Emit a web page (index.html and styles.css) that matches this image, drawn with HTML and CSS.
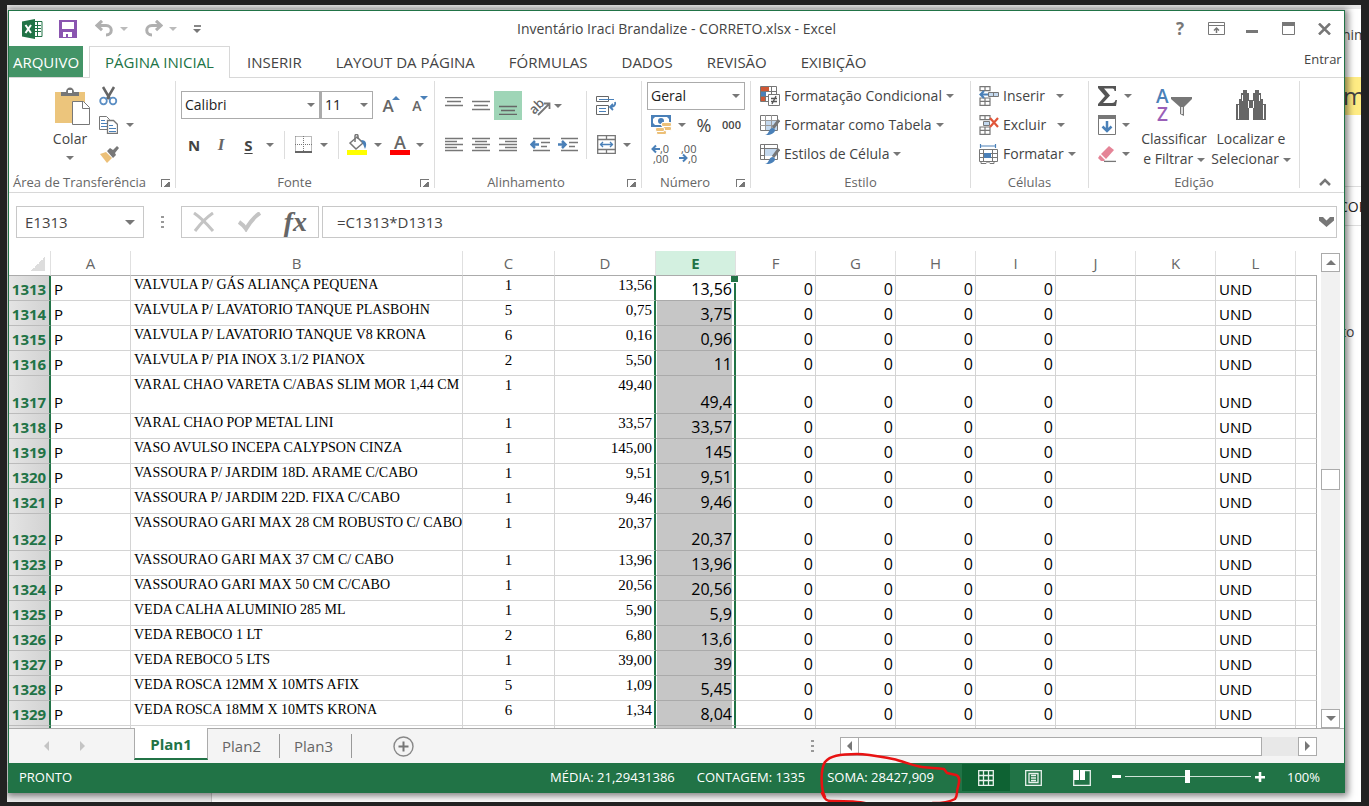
FILE: index.html
```html
<!DOCTYPE html>
<html lang="pt-BR">
<head>
<meta charset="utf-8">
<title>Inventário Iraci Brandalize - CORRETO.xlsx - Excel</title>
<link rel="stylesheet" href="styles.css">
</head>
<body>
<div class="page">
  <div class="behind" aria-hidden="true">
    <span class="peek peek-top">nim</span>
    <span class="peek peek-mark">m</span>
    <span class="peek peek-row">COPI</span>
    <span class="peek peek-low">to</span>
    <span class="behind-footer"></span>
  </div>

  <main class="window">
    <header class="titlebar">
      <div class="quick">
        <svg class="logo" width="21" height="20" viewBox="0 0 21 20"><path fill="#fff" stroke="#217346" d="M11 2.500h9v15h-9z"/><path stroke="#217346" d="M12 6.500h7M12 9.500h7M12 12.500h7M15.500 3v14"/><path fill="#217346" d="M0 2.500 13 0v20L0 17.500z"/><path stroke="#fff" stroke-width="2" d="m3.500 6 5.500 8M9 6l-5.500 8"/></svg>
        <button class="q save" aria-label="Salvar"><svg width="18" height="18" viewBox="0 0 18 18"><path fill="#8a55b0" d="M0 0h18v18H0z"/><path fill="#fff" d="M3 2h12v7H3zM4 12h9v5H9v-3H7v3H4z"/></svg></button>
        <button class="q undo" aria-label="Desfazer"><svg width="19" height="17" viewBox="0 0 19 17"><path fill="none" stroke="#b0b0b0" stroke-width="3" d="M3 5.500h8c7 0 7 9.500 0 9.500"/><path fill="none" stroke="#b0b0b0" stroke-width="3" d="m7 .8-5 4.700 5 4.700"/></svg><i class="caret pale"></i></button>
        <button class="q redo" aria-label="Refazer"><svg width="19" height="17" viewBox="0 0 19 17"><path fill="none" stroke="#b0b0b0" stroke-width="3" d="M16 5.500H8c-7 0-7 9.500 0 9.500"/><path fill="none" stroke="#b0b0b0" stroke-width="3" d="m12 .8 5 4.700-5 4.700"/></svg><i class="caret pale"></i></button>
        <button class="q more" aria-label="Personalizar"><i class="dash"></i><i class="caret"></i></button>
      </div>
      <h1>Inventário Iraci Brandalize - CORRETO.xlsx - Excel</h1>
      <div class="controls">
        <button class="help" aria-label="Ajuda">?</button>
        <button aria-label="Opções da faixa"><svg width="17" height="13" viewBox="0 0 17 13"><path fill="none" stroke="#777" d="M.5.500h16v12H.5zM1 3.500h15"/><path fill="none" stroke="#777" stroke-width="1.500" d="M8.500 11V6M6 8.500l2.500-2.500 2.500 2.500"/></svg></button>
        <button aria-label="Minimizar"><svg width="12" height="13" viewBox="0 0 12 13"><path fill="#777" d="M0 8h12v3H0z"/></svg></button>
        <button aria-label="Maximizar"><svg width="13" height="13" viewBox="0 0 13 13"><path fill="none" stroke="#777" d="M.5.500h12v12H.5z"/><path fill="#777" d="M0 0h13v4H0z"/></svg></button>
        <button aria-label="Fechar"><svg width="13" height="12" viewBox="0 0 13 12"><path stroke="#777" stroke-width="2.500" d="m1 .5 11 11M12 .5l-11 11"/></svg></button>
      </div>
    </header>

    <nav class="tabs">
      <button class="file">ARQUIVO</button>
      <button class="tab on">PÁGINA INICIAL</button>
      <button class="tab">INSERIR</button>
      <button class="tab">LAYOUT DA PÁGINA</button>
      <button class="tab">FÓRMULAS</button>
      <button class="tab">DADOS</button>
      <button class="tab">REVISÃO</button>
      <button class="tab">EXIBIÇÃO</button>
      <a class="signin" href="#entrar">Entrar</a>
    </nav>

    <section class="ribbon">
      <div class="group g-clip">
        <div class="body">
          <button class="big paste"><svg width="36" height="40" viewBox="0 0 36 40"><path fill="#ecc57c" d="M1 5h30v31H1z"/><path fill="#777" d="M7 9V5h5c0-6 8-6 8 0h5v4z"/><path fill="#fff" d="M14 3h4v3h-4z"/><path fill="#fff" stroke="#777" d="M18.500 14.500h11l6 6v17h-17z"/><path fill="none" stroke="#777" d="M28.500 15v6.500H35"/></svg><span>Colar</span><i class="caret"></i></button>
          <div class="stack">
            <button aria-label="Recortar"><svg width="19" height="20" viewBox="0 0 19 20"><path stroke="#666" stroke-width="2.500" d="M4 1l7 12M15 1 8 13"/><g fill="none" stroke="#5b8ec4" stroke-width="1.800"><circle cx="4.500" cy="15" r="3.300"/><circle cx="14" cy="15" r="3.300"/></g></svg></button>
            <button aria-label="Copiar"><svg width="19" height="18" viewBox="0 0 19 18"><path fill="#fff" stroke="#777" d="M.5.500h7l3 3v10H.5z"/><path stroke="#4a80b8" d="M2 4.500h4M2 7.500h6M2 10.500h6"/><path fill="#fff" stroke="#777" stroke-width="1.300" d="M8.500 4.500h6l4 4v9h-10z"/><path stroke="#4a80b8" d="M10 9.500h4M10 12.500h7M10 15.500h7"/></svg><i class="caret"></i></button>
            <button aria-label="Pincel de formatação"><svg width="20" height="18" viewBox="0 0 20 18"><path fill="#777" d="m8 6 3-3 3 2 4-4 2 2-4 5 1 2-3 3z"/><path fill="#ecc078" d="m1 9 6-2 6 6-5 5z"/></svg></button>
          </div>
        </div>
        <footer>Área de Transferência<i class="launch"></i></footer>
      </div>

      <div class="group g-font">
        <div class="body rows2">
          <div class="fontline">
            <label class="combo name"><select aria-label="Fonte"><option>Calibri</option></select><i class="caret"></i></label>
            <label class="combo size"><select aria-label="Tamanho"><option>11</option></select><i class="caret"></i></label>
            <button class="glyph grow" aria-label="Aumentar fonte">A<i class="up"></i></button>
            <button class="glyph shrink" aria-label="Diminuir fonte">A<i class="down"></i></button>
          </div>
          <div class="styleline">
            <button class="glyph b">N</button><button class="glyph i">I</button><button class="glyph u">S</button><i class="caret"></i><i class="sep"></i>
            <button aria-label="Bordas"><svg width="17" height="17" viewBox="0 0 17 17"><path fill="none" stroke="#777" stroke-dasharray="1 1" d="M.5.500h16v15M.5.500v15M8.500 0v15M0 8.500h17"/><path fill="#666" d="M0 15h17v2H0z"/></svg></button><i class="caret"></i><i class="sep"></i>
            <button aria-label="Cor de preenchimento"><svg width="21" height="21" viewBox="0 0 21 21"><path fill="#fff" stroke="#777" stroke-width="1.500" d="M3 9l7-6 6 6-7 6z"/><path fill="none" stroke="#777" stroke-width="1.500" d="M8 8V2c0-2 3-2 3 0v3"/><path fill="#4a80b8" d="M14 6c6 0 6 5 4 9l-2-5z"/><path fill="#ff0" d="M0 16h20v5H0z"/></svg></button><i class="caret"></i>
            <button class="glyph color" aria-label="Cor da fonte">A</button><i class="caret"></i>
          </div>
        </div>
        <footer>Fonte<i class="launch"></i></footer>
      </div>

      <div class="group g-align">
        <div class="body rows2 cols">
          <div class="aligns">
            <button aria-label="Alinhar em cima"><svg width="18" height="18" viewBox="0 0 18 18"><path stroke="#777" stroke-width="1.300" d="M0 .5h18M2 4.500h14M0 8.500h18"/></svg></button>
            <button aria-label="Alinhar no meio"><svg width="18" height="18" viewBox="0 0 18 18"><path stroke="#777" stroke-width="1.300" d="M0 4.500h18M2 8.500h14M0 12.500h18"/></svg></button>
            <button class="on" aria-label="Alinhar embaixo"><svg width="18" height="18" viewBox="0 0 18 18"><path stroke="#666" stroke-width="1.300" d="M0 9.500h18M2 13.500h14M0 17.500h18"/></svg></button>
            <button class="orient" aria-label="Orientação"><svg width="21" height="20" viewBox="0 0 21 20"><path fill="none" stroke="#777" stroke-width="1.800" d="M8 19 19 8M14 7.500h5.500V13"/><text class="ab" x="-2" y="14" transform="rotate(-45 7 9)">ab</text></svg><i class="caret"></i></button>
            <span></span>
            <button aria-label="Esquerda"><svg width="18" height="15" viewBox="0 0 18 15"><path stroke="#777" stroke-width="1.300" d="M0 1.500h18M0 4.500h12M0 7.500h18M0 10.500h12M0 13.500h18"/></svg></button>
            <button aria-label="Centro"><svg width="18" height="15" viewBox="0 0 18 15"><path stroke="#777" stroke-width="1.300" d="M0 1.500h18M3 4.500h12M0 7.500h18M3 10.500h12M0 13.500h18"/></svg></button>
            <button aria-label="Direita"><svg width="18" height="15" viewBox="0 0 18 15"><path stroke="#777" stroke-width="1.300" d="M0 1.500h18M6 4.500h12M0 7.500h18M6 10.500h12M0 13.500h18"/></svg></button>
            <button class="indent" aria-label="Diminuir recuo"><svg width="20" height="15" viewBox="0 0 20 15"><path stroke="#777" stroke-width="1.300" d="M3 1.500h17M11 5.500h9M11 9.500h6M3 13.500h17"/><path fill="none" stroke="#4a80b8" stroke-width="2.500" d="M9 7.500H2M5 4 1.500 7.500 5 11"/></svg></button>
            <button aria-label="Aumentar recuo"><svg width="20" height="15" viewBox="0 0 20 15"><path stroke="#777" stroke-width="1.300" d="M3 1.500h17M11 5.500h9M11 9.500h6M3 13.500h17"/><path fill="none" stroke="#4a80b8" stroke-width="2.500" d="M0 7.500h7M4 4l3.500 3.500L4 11"/></svg></button>
          </div>
          <i class="sep tall"></i>
          <div class="wraps">
            <button aria-label="Quebrar texto"><svg width="21" height="19" viewBox="0 0 21 19"><path fill="none" stroke="#666" d="M.5.500h12v5H.5zM.5 9.500h12v9H.5z"/><path fill="none" stroke="#4a80b8" d="M3 3.500h15M3 12.500h7M3 15.500h7"/><path fill="none" stroke="#4a80b8" stroke-width="1.800" d="M19 6c1 3-1 5-5 5M17 8l-3 3 3 3"/></svg></button><span></span>
            <button aria-label="Mesclar"><svg width="19" height="19" viewBox="0 0 19 19"><path fill="none" stroke="#777" stroke-width="1.300" d="M.7.700h17.600v17.600H.7zM0 4.500h19M0 14.500h19M9.500 0v4.500M9.500 14.500V19"/><path fill="none" stroke="#4a80b8" stroke-width="1.300" d="M3 9.500h13M6 7 3.500 9.500 6 12M13 7l2.500 2.500L13 12"/></svg></button><i class="caret"></i>
          </div>
        </div>
        <footer>Alinhamento<i class="launch"></i></footer>
      </div>

      <div class="group g-num">
        <div class="body stackbody">
          <label class="combo fmt"><select aria-label="Formato de número"><option>Geral</option></select><i class="caret"></i></label>
          <div class="numline">
            <button aria-label="Moeda"><svg width="21" height="20" viewBox="0 0 21 20"><path fill="#fff" stroke="#4a80b8" stroke-width="2" d="M1 1h18v10H1z"/><path fill="#4a80b8" d="M1 1h4L1 5zM19 1h-4l4 4zM1 11V7l4 4z"/><circle cx="10" cy="6" r="3" fill="#4a80b8"/><g fill="#ecc078" stroke="#fff"><rect x="10.500" y="7.500" width="10" height="4" rx="1.500"/><rect x="10.500" y="11.500" width="10" height="4" rx="1.500"/><rect x="5.500" y="15.500" width="10" height="4" rx="1.500"/><rect x="4.500" y="12.500" width="9" height="4" rx="1.500"/></g></svg></button><i class="caret"></i>
            <button class="pct">%</button><button class="zeros">000</button>
          </div>
          <div class="numline">
            <button class="dec" aria-label="Aumentar casas"><svg width="20" height="20" viewBox="0 0 20 20"><path fill="none" stroke="#4a80b8" stroke-width="2" d="M9 5H2M5 1.500 1.500 5 5 8.500"/><text x="9" y="9">,0</text><text x="2" y="19">,00</text></svg></button>
            <button class="dec wide" aria-label="Diminuir casas"><svg width="20" height="20" viewBox="0 0 20 20"><path fill="none" stroke="#4a80b8" stroke-width="2" d="M0 14h7M4 10.500 7.500 14 4 17.500"/><text x="2" y="9">,00</text><text x="9" y="19">,0</text></svg></button>
          </div>
        </div>
        <footer>Número<i class="launch"></i></footer>
      </div>

      <div class="group g-style">
        <div class="body stackbody">
          <button class="cmd"><svg width="20" height="20" viewBox="0 0 20 20"><path fill="#fff" stroke="#777" d="M.5.500h16v15H.5zM0 5.500h17M0 10.500h17M5.500 0v15M11.500 0v15"/><path fill="#cf5734" d="M1 1h8v4H1zM1 11h4v4H1z"/><path fill="#4a80b8" d="M1 6h5v4H1z"/><path fill="#fff" stroke="#777" d="M8.500 8.500h11v11h-11z"/><path stroke="#555" stroke-width="1.300" d="M11 12.500h6M11 15.500h6M16 10l-4 8"/></svg>Formatação Condicional<i class="caret"></i></button>
          <button class="cmd"><svg width="20" height="20" viewBox="0 0 20 20"><path fill="#fff" stroke="#777" d="M.5.500h17v15H.5z"/><path fill="#c3d8ee" d="M5 5h12v10H5z"/><path stroke="#999" d="M0 5.500h17M0 10.500h17M5.500 0v15M11.500 0v15"/><path stroke="#777" stroke-width="3" d="m19 5-6 8"/><path fill="#4a80b8" d="M5 20c5-1 3-7 8-7 5 2 0 8-8 7z"/></svg>Formatar como Tabela<i class="caret"></i></button>
          <button class="cmd"><svg width="20" height="20" viewBox="0 0 20 20"><path fill="#fff" stroke="#777" d="M.5.500h17v15H.5zM0 4.500h17M4.500 0v15M0 11.500h17"/><path fill="#c3d8ee" d="M5 5h12v7H5z"/><path stroke="#777" stroke-width="3" d="m19 5-6 8"/><path fill="#4a80b8" d="M5 20c5-1 3-7 8-7 5 2 0 8-8 7z"/></svg>Estilos de Célula<i class="caret"></i></button>
        </div>
        <footer>Estilo</footer>
      </div>

      <div class="group g-cells">
        <div class="body stackbody">
          <button class="cmd spaced"><svg width="20" height="20" viewBox="0 0 20 20"><path fill="#fff" stroke="#777" stroke-width="1.200" d="M1 .6h10v4H1zM6 0v4M1 15.400h10v4H1zM6 12v7.500M1 12h10v3.500H1z"/><path fill="#c3d8ee" stroke="#777" d="M9.500 6.500h10v4h-10z"/><path stroke="#777" d="M14.500 6v5"/><path fill="none" stroke="#4a80b8" stroke-width="2.200" d="M9 8.500H2M5 5 1.500 8.500 5 12"/></svg>Inserir<i class="caret"></i></button>
          <button class="cmd spaced"><svg width="20" height="20" viewBox="0 0 20 20"><path fill="#fff" stroke="#777" stroke-width="1.200" d="M1 .6h10v4H1zM6 0v4M1 15.400h10v4H1zM6 12v7.500M1 12h10v3.500H1z"/><path fill="#c3d8ee" stroke="#777" d="M4.500 6.500h6v4h-6z"/><path stroke="#e0563a" stroke-width="2.200" d="m11 3 8 9M19 3l-8 9"/></svg>Excluir<i class="caret"></i></button>
          <button class="cmd"><svg width="20" height="20" viewBox="0 0 20 20"><path fill="none" stroke="#4a80b8" stroke-width="1.200" d="M1.500 0v4M16.500 0v4M2 2h14"/><path fill="#fff" stroke="#777" d="M.5 5.500h18v12H.5zM0 9.500h19M0 13.500h19M4.500 5v12M13.500 5v12"/><path fill="#4a80b8" d="M5 9h7v5H5z"/><path fill="none" stroke="#777" d="M2 17v2.500h5l2-2 2 2h4V17"/></svg>Formatar<i class="caret"></i></button>
        </div>
        <footer>Células</footer>
      </div>

      <div class="group g-edit">
        <div class="body">
          <div class="stack">
            <button aria-label="Soma"><svg width="20" height="20" viewBox="0 0 20 20"><path fill="#555" d="M0 0h18v5h-1.500c0-2-1-2.500-3-2.500H6l6 7-7 7.500h9c2 0 3-1 3.500-3H19l-1 6H0v-2l7-8L0 2z"/></svg><i class="caret"></i></button>
            <button aria-label="Preencher"><svg width="18" height="20" viewBox="0 0 18 20"><path fill="#fff" stroke="#777" d="M.5.500h17v19H.5z"/><path fill="#777" d="M0 0h18v4H0z"/><path fill="none" stroke="#4a80b8" stroke-width="2.500" d="M9 6v10M4.500 11.500 9 16l4.500-4.500"/></svg><i class="caret"></i></button>
            <button aria-label="Limpar"><svg width="18" height="18" viewBox="0 0 18 18"><path fill="#e58497" d="m3 9 8-8 5 4-8 9z"/><path fill="#e58497" d="m2 10 5 5-1 1H3l-3-3z"/><path stroke="#777" stroke-width="1.300" d="M6 16.400h12"/></svg><i class="caret"></i></button>
          </div>
          <button class="big sort"><svg width="38" height="36" viewBox="0 0 38 36"><text class="az a" x="1" y="16">A</text><text class="az z" x="2" y="34">Z</text><path fill="#777" d="M16 10h21v2l-8 8v9l-4-2v-7l-9-8z"/><path stroke="#fff" stroke-width="1.500" d="M27 20v7"/></svg><span>Classificar<br>e Filtrar <i class="caret"></i></span></button>
          <button class="big find"><svg width="34" height="30" viewBox="0 0 34 30"><path fill="#666" d="M9 0h4v3h2v7h4V3h2V0h4v3h2v6h2v5h3v16H19V18h-4v12H2V14h3V9h2V3h2z"/><path fill="none" stroke="#fff" d="M4.500 15v14M29.500 15v14M8.500 5v6M25.500 5v6M14.500 11v7M19.500 11v7"/></svg><span>Localizar e<br>Selecionar <i class="caret"></i></span></button>
        </div>
        <footer>Edição</footer>
      </div>
      <button class="collapse" aria-label="Recolher a faixa"><svg width="12" height="8" viewBox="0 0 12 8"><path fill="none" stroke="#777" stroke-width="2.500" d="m1 7 5-5 5 5"/></svg></button>
    </section>

    <section class="formulabar">
      <div class="namebox"><input aria-label="Caixa de nome" value="E1313"><i class="caret large"></i></div>
      <i class="dots"></i>
      <div class="fx">
        <button aria-label="Cancelar"><svg width="22" height="20" viewBox="0 0 22 20"><path fill="none" stroke="#c4c4c4" stroke-width="3" d="M1 1c6 4 13 11 19 18M20 1C14 5 8 11 2 19"/></svg></button>
        <button aria-label="Inserir"><svg width="24" height="20" viewBox="0 0 24 20"><path fill="none" stroke="#c4c4c4" stroke-width="4" d="M2 10c3 2 5 4 7 7C13 10 17 5 23 1"/></svg></button>
        <button class="fxmark">fx</button>
      </div>
      <div class="formula"><input aria-label="Fórmula" value="=C1313*D1313"><svg width="15" height="10" viewBox="0 0 15 10"><path fill="#777" d="M0 0h4l3.500 3.500L11 0h4v3.500L7.500 10 0 3.500z"/></svg></div>
    </section>

    <section class="sheetarea">
      <div class="grid">
        <table>
          <colgroup><col class="c-h"><col class="c-n"><col class="c-b"><col class="c-c"><col class="c-d"><col class="c-e"><col class="c-n" span="7"><col></colgroup>
          <thead><tr><th class="corner"></th><th>A</th><th>B</th><th>C</th><th>D</th><th class="sel">E</th><th>F</th><th>G</th><th>H</th><th>I</th><th>J</th><th>K</th><th>L</th><th></th></tr></thead>
          <tbody id="rows"></tbody>
        </table>
      </div>
      <div class="vscroll">
        <button aria-label="Rolar para cima"><i class="tri n"></i></button>
        <div class="track"><div class="thumb"></div></div>
        <button aria-label="Rolar para baixo"><i class="tri s"></i></button>
      </div>
    </section>

    <section class="sheetbar">
      <button class="nav" aria-label="Anterior"><i class="tri w pale"></i></button>
      <button class="nav" aria-label="Próxima"><i class="tri e pale"></i></button>
      <button class="sheet on">Plan1</button>
      <button class="sheet">Plan2</button>
      <button class="sheet">Plan3</button>
      <button class="add" aria-label="Nova planilha"><svg width="21" height="21" viewBox="0 0 21 21"><circle cx="10.500" cy="10.500" r="9.500" fill="none" stroke="#888" stroke-width="1.400"/><path stroke="#777" stroke-width="2" d="M5.500 10.500h10M10.500 5.500v10"/></svg></button>
      <i class="dots"></i>
      <div class="hscroll">
        <button aria-label="Rolar à esquerda"><i class="tri w"></i></button>
        <div class="track"><div class="thumb"></div></div>
        <button aria-label="Rolar à direita"><i class="tri e"></i></button>
      </div>
    </section>

    <footer class="status">
      <span class="ready">PRONTO</span>
      <span>MÉDIA: 21,29431386</span>
      <span>CONTAGEM: 1335</span>
      <span class="sum">SOMA: 28427,909<svg class="ring" width="144" height="54" viewBox="0 0 144 54"><path fill="none" stroke="#e81212" stroke-width="2.500" stroke-linecap="round" stroke-linejoin="round" d="M6 45C2 38 1 18 6 10 11 4 20 2 38 2c12 0 25 3 36 5 10 2 20 7 29 8 8 1 14 1 22 2l3 4 9 2c5 2 3 8 2 12-2 5 0 9-3 12-6 3-15 4-22 4-9 2-17 3-33 3-16 0-25 0-32-2-6-3-28-3-37-3-4 0-6-1-9-8"/></svg></span>
      <div class="views">
        <button class="on" aria-label="Normal"><svg width="16" height="16" viewBox="0 0 16 16"><path fill="none" stroke="#e8f1ec" stroke-width="1.300" d="M.7.700h14.600v14.600H.7zM.7 5.500h14.600M.7 10.500h14.600M5.500.7v14.600M10.500.7v14.600"/></svg></button>
        <button aria-label="Layout da página"><svg width="17" height="16" viewBox="0 0 17 16"><path fill="none" stroke="#e8f1ec" stroke-width="1.300" d="M.7.700h15.600v14.600H.7zM4 3.500h9v9H4zM6 5.500h5M6 8h5M6 10.500h5"/></svg></button>
        <button aria-label="Quebra de página"><svg width="18" height="16" viewBox="0 0 18 16"><path fill="none" stroke="#e8f1ec" stroke-width="1.300" d="M.7.700h16.600v14.600H.7z"/><path fill="#fff" d="M1 0h11v10H7V7H6v3H1z"/><path stroke="#217346" d="M6.500 0v8"/></svg></button>
      </div>
      <div class="zoom">
        <button aria-label="Reduzir"><svg width="9" height="9" viewBox="0 0 9 9"><path fill="#fff" d="M0 3h9v3H0z"/></svg></button>
        <input type="range" aria-label="Zoom" min="0" max="100" value="50">
        <button aria-label="Ampliar"><svg width="10" height="10" viewBox="0 0 10 10"><path fill="#fff" d="M0 4h10v2.500H0zM3.700 0h2.600v10H3.700z"/></svg></button>
      </div>
      <button class="percent">100%</button>
    </footer>
  </main>
</div>
<script src="rows.js"></script>
</body>
</html>
```

FILE: styles.css
```css
* { box-sizing: border-box; }
html, body { height: 100%; }
body { margin: 0; padding: 5px 8px 4px 7px; background: #222; color: #444; font: 14px/20px "Open Sans", "Noto Sans", sans-serif; overflow: hidden; }
button, input, select { font: inherit; color: inherit; margin: 0; padding: 0; border: 0; background: none; border-radius: 0; outline: 0; }
button { display: flex; align-items: center; justify-content: center; white-space: nowrap; }
svg { display: block; flex: none; }
i { font-style: normal; }

.page { position: relative; height: 100%; background: #fff; display: flex; overflow: hidden; }
.behind { position: absolute; inset: 0; border-top: 4px solid #e8e8e8; }
.peek { position: absolute; right: 0; width: 24px; overflow: hidden; text-align: left; }
.peek-top { top: 16px; height: 22px; padding-left: 5px; }
.peek-mark { top: 68px; height: 38px; padding-left: 6px; background: #ffec84; font-size: 24px; line-height: 38px; }
.peek-row { top: 177px; height: 40px; padding-left: 2px; line-height: 40px; border: 1px solid #ddd; border-width: 1px 0; color: #222; }
.peek-low { top: 313px; padding-left: 4px; }
.behind-footer { position: absolute; left: 0; bottom: 0; width: 205px; height: 20px; background: #eee; border-right: 1px solid #ccc; }

.window { position: relative; flex: 1; min-width: 0; margin: 5px 16px 9px 1px; display: flex; flex-direction: column; background: #fff; border: 1px solid #217346; box-shadow: 1px 1px 7px 2px rgba(0, 0, 0, .5); }

.caret { display: inline-block; flex: none; width: 0; height: 0; border: solid transparent; border-width: 4px 4px 0; border-top-color: #777; place-self: center; }
.caret.pale { border-top-color: #bbb; }
.caret.large { border-width: 5px 5px 0; }
.sep { width: 1px; height: 28px; background: #ddd; place-self: center; }
.dots { width: 3px; height: 13px; background: repeating-linear-gradient(#999 0 2px, transparent 2px 5px); }
.tri { width: 0; height: 0; border: 5px solid transparent; }
.tri.n { border-top: 0; border-bottom-color: #777; }
.tri.s { border-bottom: 0; border-top-color: #777; }
.tri.w { border-left: 0; border-right-color: #777; }
.tri.e { border-right: 0; border-left-color: #777; }
.tri.w.pale { border-right-color: #c4c4c4; }
.tri.e.pale { border-left-color: #c4c4c4; }

.titlebar { flex: none; height: 35px; display: grid; grid-template-columns: 1fr auto 1fr; align-items: center; }
.titlebar h1 { margin: 0; font-size: 14px; font-weight: 400; }
.quick { display: flex; align-items: center; padding-left: 13px; }
.logo { margin-right: 16px; }
.save { margin-right: 18px; }
.undo, .redo { gap: 6px; margin-right: 16px; }
.more { flex-direction: column; gap: 2px; }
.dash { width: 7px; height: 2px; background: #888; }
.controls { display: flex; justify-content: flex-end; padding-right: 2px; }
.controls button { width: 36px; height: 30px; }
.controls .help { font-size: 17px; font-weight: 700; color: #777; }

.tabs { flex: none; height: 32px; display: flex; border-bottom: 1px solid #d8d8d8; font-size: 15px; }
.file { width: 74px; margin-right: 6px; background: #439467; color: #fff; height: 31px; }
.tab { height: 32px; padding: 0 17px; }
.tab.on { width: 141px; padding: 0 0 1px; color: #217346; background: #fff; border: 1px solid #d8d8d8; border-bottom: 0; }
.signin { margin-left: auto; width: 40px; height: 26px; line-height: 26px; overflow: hidden; color: #444; text-decoration: none; font-size: 13px; }

.ribbon { flex: none; display: flex; padding: 3px 0 4px; border-bottom: 1px solid #d8d8d8; }
.group { flex: none; height: 107px; display: flex; flex-direction: column; border-right: 1px solid #ddd; }
.group .body { height: 87px; flex: none; display: flex; }
.group footer { height: 20px; display: flex; align-items: flex-end; justify-content: center; line-height: 12px; font-size: 13px; color: #666; position: relative; }
.launch { position: absolute; right: 5px; bottom: 1px; width: 9px; height: 8px; border: solid #777; border-width: 1px 0 0 1px; background: linear-gradient(135deg, transparent 45%, #777 45%) right bottom / 6px 5px no-repeat; }
.group .stackbody { flex-direction: column; }
.stack { display: grid; grid-template-rows: repeat(3, 29px); }
.stack button { gap: 8px; justify-content: flex-start; }
.big { flex-direction: column; justify-content: flex-start; padding-top: 6px; text-align: center; }
.big span { line-height: 20px; }

.g-clip { width: 167px; }
.g-clip .body { padding-left: 41px; gap: 9px; }
.g-clip footer { justify-content: flex-start; padding-left: 4px; }
.paste { width: 40px; }
.paste span { margin-top: 2px; }
.paste svg { margin-left: 4px; }
.paste .caret { margin-top: 7px; }

.g-font { width: 259px; }
.g-font .body { padding-left: 5px; flex-direction: column; }
.g-font footer { padding-right: 21px; }
.rows2 { padding-top: 10px; gap: 10px; }
.fontline { display: grid; grid-template-columns: 139px 53px 30px 28px; height: 29px; }
.styleline { display: grid; grid-template-columns: 26px 28px 27px 16px 12px 26px 16px 12px 26px 16px 28px 12px; height: 29px; align-items: center; }
.combo { display: grid; grid-template-columns: 1fr 17px; border: 1px solid #ababab; height: 28px; background: #fff; color: #222; }
.combo.size { border-left-width: 2px; }
.combo select { appearance: none; width: 100%; height: 26px; padding-left: 3px; }
.glyph { position: relative; font-weight: 600; color: #666; font-size: 15px; }
.glyph.b { font-weight: 700; color: #444; }
.glyph.i { font-style: italic; font-family: "Liberation Serif", serif; font-size: 17px; font-weight: 700; }
.glyph.u { text-decoration: underline; text-underline-offset: 2px; font-weight: 700; color: #444; }
.glyph.grow { font-size: 17px; }
.glyph.shrink { font-size: 14px; }
.up, .down { position: absolute; right: 3px; top: 5px; border: 4px solid transparent; }
.up { border-top: 0; border-bottom-color: #4a80b8; }
.down { border-bottom: 0; border-top-color: #4a80b8; }
.glyph.color { place-self: center; width: 20px; height: 21px; border-bottom: 5px solid #f00; font-size: 18px; line-height: 16px; }

.g-align { width: 207px; }
.g-align .body { padding-left: 5px; gap: 0; }
.aligns { display: grid; grid-template-columns: 27px 27px 32px 28px 28px; grid-template-rows: 29px 29px; row-gap: 10px; }
.aligns .on { background: #9fd5b7; }
.aligns button:nth-child(5n + 3) { width: 28px; }
.aligns .orient { gap: 3px; justify-content: flex-start; margin-left: 4px; }
.ab { font-size: 13px; font-weight: 600; fill: #666; }
.sep.tall { height: 68px; margin: 0 4px; align-self: flex-start; }
.wraps { display: grid; grid-template-columns: 30px 12px; grid-template-rows: 29px 29px; row-gap: 10px; }
.g-align footer { padding-right: 24px; }

.g-num { width: 109px; }
.g-num .body { padding: 1px 5px 0; }
.numline { display: grid; grid-template-columns: 28px 14px 30px 25px; height: 29px; }
.pct { font-size: 18px; }
.zeros { font-size: 11px; font-weight: 600; }
.dec text { font-size: 11px; fill: #555; }
.dec.wide { width: 28px; }
.g-num footer { padding-right: 22px; }

.cmd { height: 29px; justify-content: flex-start; gap: 4px; }
.g-style { width: 220px; }
.g-style .body { padding-left: 9px; }
.g-cells { width: 118px; }
.g-cells .body { padding-left: 8px; }
.spaced .caret { margin-left: 7px; }

.g-edit { width: 211px; }
.g-edit .body { padding-left: 9px; }
.g-edit .stack { width: 40px; }
.g-edit .stack button { gap: 6px; }
.sort { width: 72px; }
.find { width: 82px; }
.sort span { margin-top: 6px; }
.find svg { margin-top: 3px; }
.find span { margin-top: 9px; }
.big span .caret { vertical-align: middle; }
.az { font-size: 19px; font-weight: 600; }
.az.a { fill: #4a80b8; }
.az.z { fill: #9a5fb8; }
.collapse { flex: 1; align-self: flex-end; height: 12px; padding-left: 6px; }

.formulabar { flex: none; height: 58px; padding: 13px 7px 13px; display: flex; align-items: center; font-size: 15px; }
.namebox, .fx, .formula { height: 32px; border: 1px solid #c8c8c8; display: flex; align-items: center; }
.namebox { width: 128px; padding-right: 8px; }
.namebox input { flex: 1; min-width: 0; padding-left: 8px; }
.formulabar .dots { margin: 0 17px; }
.fx { width: 138px; justify-content: space-between; padding: 0 11px; margin-right: 3px; }
.fxmark { font: italic 700 28px/28px "Liberation Serif", serif; color: #666; }
.formula { flex: 1; padding: 0 2px 0 14px; }
.formula input { flex: 1; min-width: 0; }

.sheetarea { flex: 1; min-height: 0; display: flex; background: #fff; }
.grid { flex: 1; min-width: 0; overflow: hidden; }
table { table-layout: fixed; width: 100%; border-collapse: separate; border-spacing: 0; }
.c-h { width: 42px; }
.c-n { width: 80px; }
.c-b { width: 332px; }
.c-c { width: 92px; }
.c-d { width: 101px; }
.c-e { width: 80px; }
thead th { height: 25px; padding: 0; font-size: 15px; line-height: 22px; font-weight: 400; color: #666; border-right: 1px solid #e0e0e0; border-bottom: 1px solid #ababab; }
thead th:last-child { border-right: 0; }
thead .sel { background: #d3f0e0; color: #217346; font-weight: 700; }
.corner { background: linear-gradient(135deg, transparent 50%, #ddd 50%) 22px 6px / 14px 14px no-repeat; }
tbody tr { height: 25px; }
tbody tr.high { height: 38px; }
tbody tr.high2 { height: 37px; }
tbody td, tbody th { padding: 0; border-right: 1px solid #d4d4d4; border-bottom: 1px solid #d4d4d4; white-space: nowrap; vertical-align: bottom; font-size: 16px; line-height: 22px; color: #000; overflow: hidden; }
tbody th { background: linear-gradient(90deg, #e4e4e4, #d2d2d2); border-right: 2px solid #217346; border-bottom-color: #bbb; color: #217346; font-size: 15px; font-weight: 700; text-align: center; }
tbody td:last-child { border-right: 1px solid #ababab; }
tbody .txt { padding-left: 3px; font-size: 15px; }
tbody .old { vertical-align: top; font: 15px/18px "Liberation Serif", serif; }
tbody .desc { font-size: 14px; padding-left: 3px; }
tbody .mid { text-align: center; }
tbody .num { text-align: right; padding-right: 2px; }
tbody .num.old { border-right: 2px solid #217346; }
tbody .sel { background: #c6c6c6; border-right: 2px solid #217346; border-bottom-color: #aaa; box-shadow: inset 1px 0 #fff, inset -2px 0 #fff; }
tbody tr:first-child .sel { background: #fff; position: relative; overflow: visible; }
tbody tr:first-child .sel::after { content: ""; position: absolute; right: -4px; top: 0; width: 7px; height: 6px; background: #217346; border-bottom: 1px solid #fff; border-left: 1px solid #fff; }

.vscroll { flex: none; width: 19px; margin: 2px 4px 0; display: flex; flex-direction: column; }
.vscroll button, .hscroll button { flex: none; width: 19px; height: 19px; background: #fff; border: 1px solid #ababab; }
.vscroll .track { flex: 1; background: #f1f1f1; display: flex; flex-direction: column; }
.vscroll .thumb { margin-top: 197px; height: 21px; background: #fff; border: 1px solid #ababab; }

.sheetbar { flex: none; height: 35px; display: flex; align-items: center; background: #f4f4f4; border-top: 1px solid #ababab; padding: 0 27px 0 19px; font-size: 15px; }
.nav { width: 36px; height: 30px; }
.nav:nth-child(2) { margin-right: 34px; }
.sheet { align-self: flex-start; width: 72px; height: 24px; margin-top: 5px; padding-right: 4px; border-right: 1px solid #999; color: #666; }
.sheet.on { width: 74px; height: 32px; margin-top: -1px; background: #fff; border: solid #ababab; border-width: 0 1px; border-bottom: 2px solid #217346; color: #217346; font-weight: 700; padding: 2px 0 0; }
.add { margin-left: 41px; }
.sheetbar .dots { margin-left: auto; margin-right: 26px; }
.hscroll { width: 37%; display: flex; }
.hscroll .track { flex: 1; background: #e8e8e8; }
.hscroll .thumb { width: 92%; height: 19px; margin-left: -1px; background: #fff; border: 1px solid #ababab; }

.status { flex: none; height: 29px; display: flex; align-items: center; gap: 22px; padding: 0 24px 2px 10px; background: #217346; color: #fff; font-size: 13px; }
.ready { margin-right: auto; }
.sum { position: relative; }
.ring { position: absolute; left: -8px; top: -15px; z-index: 2; }
.views { display: flex; align-self: stretch; margin: 1px 0 -1px 6px; }
.views button { width: 48px; }
.views .on { background: #0e6233; }
.zoom { display: flex; align-items: center; margin-left: -16px; }
.zoom input { appearance: none; width: 126px; height: 13px; margin: 0 4px; background: linear-gradient(#cfe3d7, #cfe3d7) center / 100% 1px no-repeat; }
.zoom input::-webkit-slider-thumb { appearance: none; width: 5px; height: 13px; background: #fff; }
```

FILE: rows.js
```js
const items = [
  ["VALVULA P/ GÁS ALIANÇA PEQUENA", "1", "13,56", "13,56"],
  ["VALVULA P/ LAVATORIO TANQUE PLASBOHN", "5", "0,75", "3,75"],
  ["VALVULA P/ LAVATORIO TANQUE V8 KRONA", "6", "0,16", "0,96"],
  ["VALVULA P/ PIA INOX 3.1/2 PIANOX", "2", "5,50", "11"],
  ["VARAL CHAO VARETA C/ABAS SLIM MOR 1,44 CM", "1", "49,40", "49,4", "high"],
  ["VARAL CHAO POP METAL LINI", "1", "33,57", "33,57"],
  ["VASO AVULSO INCEPA CALYPSON CINZA", "1", "145,00", "145"],
  ["VASSOURA P/ JARDIM 18D. ARAME C/CABO", "1", "9,51", "9,51"],
  ["VASSOURA P/ JARDIM 22D. FIXA C/CABO", "1", "9,46", "9,46"],
  ["VASSOURAO GARI MAX 28 CM ROBUSTO C/ CABO", "1", "20,37", "20,37", "high2"],
  ["VASSOURAO GARI MAX 37 CM C/ CABO", "1", "13,96", "13,96"],
  ["VASSOURAO GARI MAX 50 CM C/CABO", "1", "20,56", "20,56"],
  ["VEDA CALHA ALUMINIO 285 ML", "1", "5,90", "5,9"],
  ["VEDA REBOCO 1 LT", "2", "6,80", "13,6"],
  ["VEDA REBOCO 5 LTS", "1", "39,00", "39"],
  ["VEDA ROSCA 12MM X 10MTS AFIX", "5", "1,09", "5,45"],
  ["VEDA ROSCA 18MM X 10MTS KRONA", "6", "1,34", "8,04"]
];
const zero = '<td class="num">0</td>';
const row = (head, a, [name, qty, price, total, size], zeros, unit) =>
  `<tr class="${size || ""}"><th>${head}</th><td class="txt">${a}</td><td class="old desc">${name}</td>` +
  `<td class="old mid">${qty}</td><td class="old num">${price}</td><td class="num sel">${total}</td>` +
  `${zeros}<td></td><td></td><td class="txt">${unit}</td><td></td></tr>`;
document.getElementById("rows").innerHTML =
  items.map((it, n) => row(1313 + n, "P", it, zero.repeat(4), "UND")).join("") +
  row("", "", ["", "", "", ""], "<td></td>".repeat(4), "");
```
